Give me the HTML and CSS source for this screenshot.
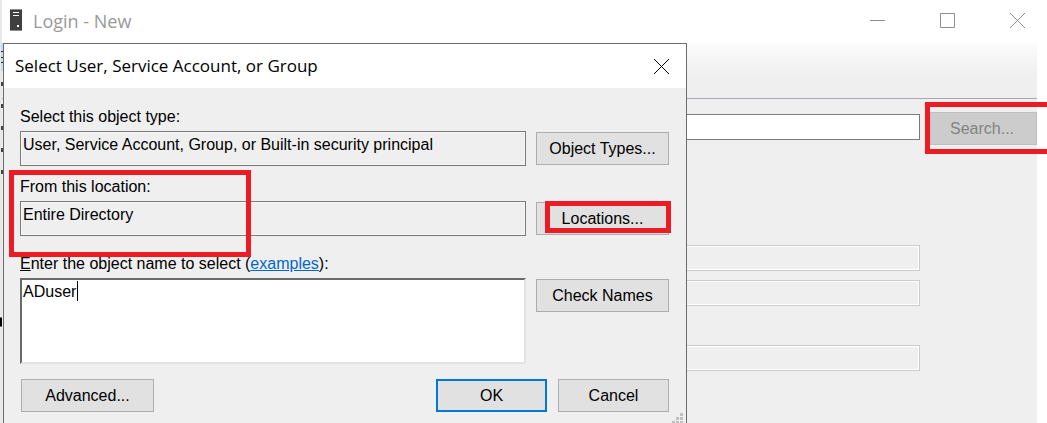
FILE: index.html
```html
<!DOCTYPE html>
<html lang="en">
<head>
<meta charset="utf-8">
<title>Login - New</title>
<link rel="stylesheet" href="styles.css">
</head>
<body>
<main class="window">
  <header class="titlebar">
    <svg class="app-icon" width="12" height="22" viewBox="0 0 12 22" aria-hidden="true">
      <rect width="12" height="22" fill="#404040"/>
      <path d="M0 .5H12M0 21.5H12" stroke="#8a8a8a"/>
      <path d="M3 3.500H9M3 6.500H9" stroke="#fff"/>
      <rect x="7" y="16" width="2" height="2" fill="#fff"/>
    </svg>
    <h1 class="window-title">Login - New</h1>
    <div class="window-controls">
      <button class="control" aria-label="Minimize"><svg width="15" height="15" viewBox="0 0 15 15"><path d="M0 7.500H15"/></svg></button>
      <button class="control" aria-label="Maximize"><svg width="15" height="15" viewBox="0 0 15 15"><path d="M.5 .5H14.500V14.500H.5Z"/></svg></button>
      <button class="control" aria-label="Close"><svg width="15" height="15" viewBox="0 0 15 15"><path d="M0 0L15 15M15 0L0 15"/></svg></button>
    </div>
  </header>
  <div class="toolbar"></div>
  <section class="page">
    <div class="search-row">
      <input class="login-name" type="text" aria-label="Login name">
      <div class="marked marked-search"><button class="button search" disabled>Search...</button></div>
    </div>
    <div class="disabled-fields">
      <input class="disabled-field" type="text" aria-label="Password" disabled>
      <input class="disabled-field" type="text" aria-label="Confirm password" disabled>
      <input class="disabled-field old" type="text" aria-label="Old password" disabled>
    </div>
  </section>
  <svg class="edge" width="3" height="380" viewBox="0 0 3 380" aria-hidden="true">
    <rect x="1" width="2" height="28" fill="#c9dbe8"/>
    <path d="M1 8.500H3M1 14.500H3M1 19.500H3" stroke="#222"/>
    <path d="M1 41H3M1 63H3M1 85H3M1 107H3M1 129H3" stroke="#444" stroke-width="4"/>
    <path d="M0 279H2" stroke="#000" stroke-width="9"/>
  </svg>
</main>

<form class="dialog" role="dialog" aria-labelledby="dialog-title">
  <header class="dialog-bar">
    <h2 class="dialog-title" id="dialog-title">Select User, Service Account, or Group</h2>
    <button class="dialog-close" type="button" aria-label="Close"><svg width="15" height="15" viewBox="0 0 15 15"><path d="M0 0L15 15M15 0L0 15"/></svg></button>
  </header>
  <div class="dialog-body">
    <div class="group">
      <label class="label" for="type">Select this object type:</label>
      <div class="row">
        <input class="field" id="type" type="text" readonly value="User, Service Account, Group, or Built-in security principal">
        <button class="button" type="button">Object Types...</button>
      </div>
    </div>
    <div class="group marked marked-location">
      <label class="label" for="location">From this location:</label>
      <div class="row">
        <input class="field" id="location" type="text" readonly value="Entire Directory">
        <div class="marked marked-button"><button class="button locations" type="button">Locations...</button></div>
      </div>
    </div>
    <div class="group names">
      <div class="label"><label for="names"><u>E</u>nter the object name to select</label> (<a class="link" href="#examples">examples</a>):</div>
      <div class="row row-top">
        <div class="names-box">
          <textarea class="names-input" id="names">ADuser</textarea>
          <span class="caret"></span>
        </div>
        <button class="button check" type="button">Check Names</button>
      </div>
    </div>
    <footer class="actions">
      <button class="button advanced" type="button">Advanced...</button>
      <button class="button action default" type="submit">OK</button>
      <button class="button action" type="button">Cancel</button>
    </footer>
  </div>
  <svg class="grip" width="12" height="12" viewBox="0 0 12 12" aria-hidden="true">
    <path fill="#bfbfbf" d="M8 0h3v3h-3zM4 4h3v3h-3zM8 4h3v3h-3zM0 8h3v3h-3zM4 8h3v3h-3zM8 8h3v3h-3z"/>
  </svg>
</form>
</body>
</html>
```
FILE: styles.css
```css
*, *::after { box-sizing: border-box; }

body {
  margin: 0;
  height: 100vh;
  position: relative;
  overflow: hidden;
  background: #fff;
  color: #000;
  font: 16px/20px "Liberation Sans", Arial, sans-serif;
}

button, input, textarea { font: inherit; color: inherit; margin: 0; border-radius: 0; outline: 0; }

.window {
  min-height: 100vh;
  display: flex;
  flex-direction: column;
  padding-right: 10px;
  border-left: 2px solid #e8e8e8;
}

.titlebar {
  height: 43px;
  display: flex;
  align-items: center;
  padding-left: 8px;
  background: #fff;
}

.app-icon { margin-bottom: 3px; }

.window-title {
  flex: 1;
  margin: 0 0 2px 11px;
  font: 18px/24px "Open Sans", "Noto Sans", sans-serif;
  color: #999;
}

.window-controls { display: flex; gap: 39px; padding-right: 4px; }

.control, .dialog-close {
  display: flex;
  padding: 8px;
  border: 0;
  background: none;
}

.control { margin-bottom: 3px; }

.control svg { fill: none; stroke: #8f8f8f; }

.toolbar {
  height: 56px;
  border-bottom: 1px solid #a9a8b0;
  background: linear-gradient(#fcfcfc, #efefef 60%);
}

.page { flex: 1; padding: 13px 0 0 12px; background: #efefef; }

.search-row { display: flex; align-items: center; gap: 10px; }

.login-name {
  flex: 1;
  min-width: 0;
  height: 26px;
  margin-bottom: 3px;
  border: 1px solid #7a7a7a;
  background: #fff;
}

.button {
  width: 133px;
  height: 33px;
  padding: 0;
  border: 1px solid #adadad;
  background: #e1e1e1;
}

.search {
  display: block;
  width: 107px;
  padding-right: 3px;
  background: #ccc;
  border-color: #bfbfbf;
  color: #838383;
}

.disabled-fields {
  display: flex;
  flex-direction: column;
  gap: 9px;
  margin: 100px 117px 0 0;
}

.disabled-field {
  height: 26px;
  border: 1px solid #ccc;
  background: #efefef;
  box-shadow: inset 0 0 0 1px #fff;
}

.old { margin-top: 30px; }

.edge { position: absolute; left: 0; top: 43px; }

.dialog {
  position: absolute;
  left: 3px;
  right: 360px;
  top: 43px;
  height: 384px;
  border: 1px solid #6b6b6b;
  background: #efefef;
}

.dialog-bar {
  height: 44px;
  display: flex;
  align-items: center;
  justify-content: space-between;
  padding: 0 9px 0 11px;
  background: #fff;
}

.dialog-title { margin: 0; font: 17px/24px "Open Sans", "Noto Sans", sans-serif; }

.dialog-close svg { fill: none; stroke: #000; }

.dialog-body {
  display: flex;
  flex-direction: column;
  gap: 11px;
  padding: 19px 17px 0 16px;
}

.label { display: block; margin-bottom: 4px; }

.row { display: grid; grid-template-columns: 1fr 133px; gap: 10px; align-items: center; }

.row-top { align-items: start; }

.field {
  min-width: 0;
  width: 100%;
  height: 35px;
  padding: 0 2px 8px;
  border: 1px solid #7a7a7a;
  background: #efefef;
  box-shadow: inset 0 0 0 1px #f8f8f8;
}

.locations { display: block; }

.check { margin-top: 1px; }

.names { margin-top: 7px; }

.link { color: #0066cc; }

.names-box { position: relative; }

.names-input {
  display: block;
  width: 100%;
  height: 86px;
  padding: 2px 1px;
  resize: none;
  border: 2px solid;
  border-color: #696969 #e3e3e3 #e3e3e3 #696969;
  background: #fff;
}

.caret { position: absolute; left: 57px; top: 3px; width: 1px; height: 20px; background: #000; }

.actions { display: flex; gap: 11px; margin-top: 4px; padding-left: 1px; }

.advanced { margin-right: auto; }

.action { width: 111px; }

.default { border: 2px solid #0078d7; }

.grip { position: absolute; right: 2px; bottom: 1px; }

.marked { position: relative; }

.marked::after {
  content: "";
  position: absolute;
  border: 5px solid #ed1c24;
  pointer-events: none;
}

.marked-location::after { left: -11px; top: -17px; width: 242px; height: 87px; }

.marked-location::after { top: -7px; }

.marked-button::after { left: 9px; top: -1px; right: -2px; height: 32px; }

.marked-search::after { left: -5px; top: -10px; right: -20px; height: 52px; }
```
